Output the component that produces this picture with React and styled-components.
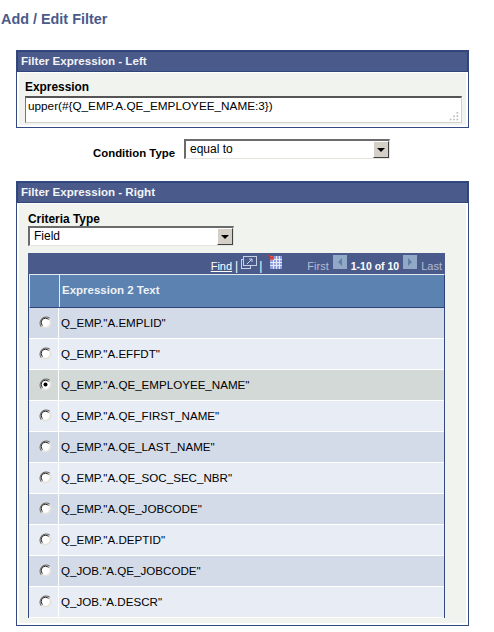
import React from 'react';
import styled, { createGlobalStyle } from 'styled-components';

const Global = createGlobalStyle`
  html, body { margin: 0; padding: 0; background: #fff; }
  body { font-family: "Liberation Sans", Arial, sans-serif; font-size: 11px; color: #000; }
  * { box-sizing: border-box; }
`;

const Page = styled.div`
  width: 494px; height: 632px; overflow: hidden;
  display: flex; flex-direction: column;
`;
const Title = styled.h1`
  margin: 11px 0 0 1px; height: 39px; flex: none;
  font-size: 14.4px; line-height: 16px; font-weight: bold; color: #4a5a8a;
`;
const Panel = styled.section`
  margin-left: 16px; width: 453px; border: 1px solid #34497f;
  background: #fff; display: flex; flex-direction: column;
  height: ${p => p.$h}px; flex: none;
`;
const PanelHead = styled.div`
  height: 21px; background: #4a5a8a; border: 1px solid #2f4478; flex: none;
  color: #f2f4f8; font-weight: bold; font-size: 11.6px; line-height: 18px; padding-left: 3px;
`;
const PanelBody = styled.div`
  flex: 1; margin: 1px 2px 2px 2px; background: #f1f3ef;
  padding: ${p => p.$pad};
`;
const Label = styled.div`
  font-weight: bold; font-size: 11.9px; line-height: 14px; color: #000;
`;
const Expr = styled.div`
  margin-top: 2px; width: 437px; height: 27px; background: #fff;
  border-style: solid; border-width: 2px 1px 1px 1px;
  border-color: #555 #d4d0c8 #d4d0c8 #777;
  font-size: 11.75px; line-height: 13px; padding: 1px 2px;
  display: flex; flex-direction: column; justify-content: space-between;
`;
const Grip = styled.svg`
  align-self: flex-end; display: block; margin: 0 -1px -1px 0;
`;
const CondRow = styled.div`
  display: flex; align-items: flex-start; margin: 11px 0 0 93px; height: 42px; flex: none;
`;
const CondLabel = styled(Label)`
  margin-top: 7px; width: 91px; flex: none; font-size: 11.4px;
`;
const Select = styled.div`
  width: 206px; height: 20px; flex: none; background: #fff;
  border-style: solid; border-width: 2px 1px 1px 2px;
  border-color: #6b6b6b #e6e4de #e6e4de #6b6b6b;
  display: flex; justify-content: space-between; font-size: 12px; line-height: 17px;
  padding-left: 4px;
`;
const SelectBtn = styled.div`
  width: 16px; height: 17px; background: #d4d0c8; flex: none;
  border-style: solid; border-width: 1px; border-color: #fff #404040 #404040 #fff;
  display: flex; align-items: center; justify-content: center;
`;
const Arrow = styled.svg`display: block;`;
const Grid = styled.div`
  margin-top: 7px; width: 417px; border-left: 1px solid #34497f; border-right: 1px solid #34497f;
`;
const NavBar = styled.div`
  height: 21px; background: #4a5a8a; display: flex; align-items: center; justify-content: flex-end;
  padding-right: 3px; color: #fff; font-size: 11px; margin: 0 -1px;
`;
const NavLink = styled.span`
  color: #fff; text-decoration: underline; font-size: 11px; margin-top: 4px;
`;
const Sep = styled.span`
  color: #fff; font-size: 12px; margin: 4px ${p => p.$mr}px 0 ${p => p.$ml}px;
`;
const Dim = styled.span`color: #b3bdd3; font-size: 11px; margin: 4px 0 0 ${p => p.$ml}px;`;
const Count = styled.span`color: #fff; font-weight: bold; font-size: 10.5px; margin: 4px 4px 0 4px;`;
const Icon = styled.svg`display: block; flex: none; margin-top: ${p => p.$mt || 0}px; margin-left: ${p => p.$ml || 0}px;`;
const Row = styled.div`
  display: grid; grid-template-columns: 30px 1fr; height: ${p => p.$h || 31}px;
  background: ${p => p.$bg};
  border-bottom: 1px solid #fff;
`;
const HeadRow = styled(Row)`
  background: #5b82b0; border-top: 1px solid #e4e8f0; border-bottom: 1px solid #2f4478;
  border-right: 1px solid #2f4478;
  margin-right: -1px; border-left: 1px solid #e4e8f0;
`;
const HeadCell = styled.div`
  border-left: ${p => p.$first ? 0 : '1px solid #e4e8f0'};
  margin-left: ${p => p.$first ? 0 : -1}px;
  border-right: ${p => p.$first ? '1px solid #2f4478' : 0};
  color: #eef1f6; font-weight: bold; font-size: 11.5px; line-height: 30px; padding-left: 2px;
`;
const RadioCell = styled.div`
  border-right: 1px solid #fff; display: flex; align-items: center; justify-content: center;
  padding-left: 3px; padding-bottom: 1px;
`;
const TextCell = styled.div`
  font-size: 11.6px; line-height: 30px; padding-left: 2px; white-space: nowrap;
`;

const Radio = ({ on }) => (
  <svg width="13" height="13" viewBox="0 0 13 13" style={{ display: 'block' }}>
    <circle cx="6.5" cy="6.5" r="6" fill="#e4e2dc" />
    <path d="M2.3 10.7A6 6 0 0 1 10.7 2.3" fill="none" stroke="#6f6f6f" strokeWidth="1.2" />
    <circle cx="6.5" cy="6.5" r="4.2" fill="#fff" />
    <path d="M3.5 9.5A4.2 4.2 0 0 1 9.5 3.5" fill="none" stroke="#222" strokeWidth="1" />
    {on && <circle cx="6.5" cy="6.5" r="2" fill="#000" />}
  </svg>
);

const DropArrow = () => (
  <Arrow width="8" height="4" viewBox="0 0 8 4"><path d="M0 0h8L4 4z" fill="#000" /></Arrow>
);

const rows = [
  'Q_EMP."A.EMPLID"', 'Q_EMP."A.EFFDT"', 'Q_EMP."A.QE_EMPLOYEE_NAME"', 'Q_EMP."A.QE_FIRST_NAME"',
  'Q_EMP."A.QE_LAST_NAME"', 'Q_EMP."A.QE_SOC_SEC_NBR"', 'Q_EMP."A.QE_JOBCODE"', 'Q_EMP."A.DEPTID"',
  'Q_JOB."A.QE_JOBCODE"', 'Q_JOB."A.DESCR"',
];

export default function App() {
  return (
    <Page>
      <Global />
      <Title>Add / Edit Filter</Title>
      <Panel $h={78}>
        <PanelHead>Filter Expression - Left</PanelHead>
        <PanelBody $pad="7px 6px 0 6px">
          <Label>Expression</Label>
          <Expr>
            upper(#&#123;Q_EMP.A.QE_EMPLOYEE_NAME:3&#125;)
            <Grip width="12" height="12" viewBox="0 0 12 12" fill="#bdbdbd">
              <rect x="9" y="0" width="2" height="2" /><rect x="5" y="4" width="2" height="2" /><rect x="9" y="4" width="2" height="2" />
              <rect x="1" y="8" width="2" height="2" /><rect x="5" y="8" width="2" height="2" /><rect x="9" y="8" width="2" height="2" />
            </Grip>
          </Expr>
        </PanelBody>
      </Panel>
      <CondRow>
        <CondLabel>Condition Type</CondLabel>
        <Select>equal to<SelectBtn><DropArrow /></SelectBtn></Select>
      </CondRow>
      <Panel $h={445}>
        <PanelHead>Filter Expression - Right</PanelHead>
        <PanelBody $pad="8px 0 0 9px">
          <Label>Criteria Type</Label>
          <Select>Field<SelectBtn><DropArrow /></SelectBtn></Select>
          <Grid>
            <NavBar>
              <NavLink>Find</NavLink>
              <Sep $ml={3} $mr={3}>|</Sep>
              <Icon width="16" height="14" viewBox="0 0 16 14" fill="none" stroke="#c6cfe4" $mt={-1}>
                <rect x="0.5" y="3.5" width="9" height="9" />
                <rect x="2.5" y="0.5" width="13" height="9" fill="#4a5a8a" />
                <path d="M6 8l5-5M8 3h3v3" />
              </Icon>
              <Sep $ml={2} $mr={0}>|</Sep>
              <Icon width="14" height="14" viewBox="0 0 14 14" $mt={-3} $ml={6}>
                <rect x="2" y="1" width="12" height="13" fill="#8f9ee0" />
                <path d="M2 4.5h12M2 7.5h12M2 10.5h12M5.5 1v13M8.5 1v13M11.5 1v13" stroke="#e4e8fb" strokeWidth="1" />
                <path d="M0 0l5 4M5 1v3H2" stroke="#d8342c" strokeWidth="1.6" fill="none" />
              </Icon>
              <Dim $ml={25}>First</Dim>
              <Icon width="14" height="14" viewBox="0 0 14 14" $mt={-3} $ml={4}>
                <rect width="14" height="14" fill="#91a9c6" />
                <path d="M9 3v8L5 7z" fill="#5f7ea6" />
              </Icon>
              <Count>1-10 of 10</Count>
              <Icon width="14" height="14" viewBox="0 0 14 14" $mt={-3}>
                <rect width="14" height="14" fill="#91a9c6" />
                <path d="M5 3v8l4-4z" fill="#5f7ea6" />
              </Icon>
              <Dim $ml={4}>Last</Dim>
            </NavBar>
            <HeadRow $h={34}>
              <HeadCell $first />
              <HeadCell>Expression 2 Text</HeadCell>
            </HeadRow>
            {rows.map((r, i) => (
              <Row key={r} $bg={i === 2 ? '#d3d9d6' : i % 2 === 0 ? '#d4dbe8' : '#e7ecf5'}>
                <RadioCell><Radio on={i === 2} /></RadioCell>
                <TextCell>{r}</TextCell>
              </Row>
            ))}
          </Grid>
        </PanelBody>
      </Panel>
    </Page>
  );
}
